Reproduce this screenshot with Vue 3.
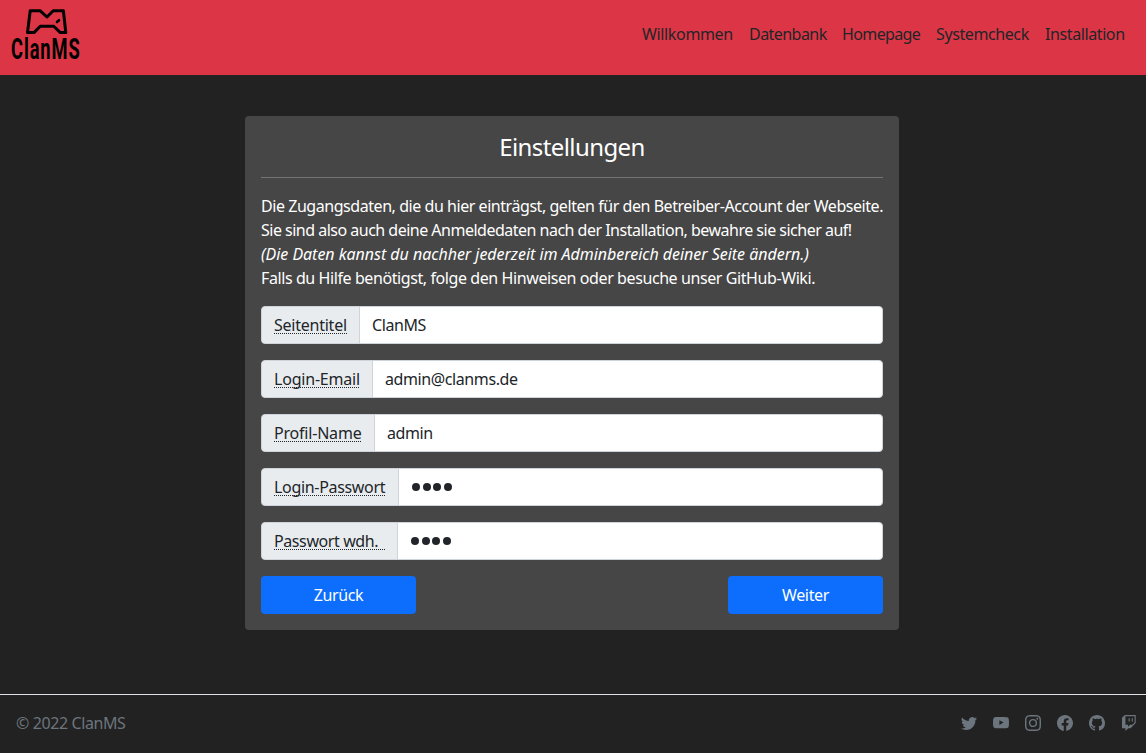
<script setup>
const nav = [
  { text: 'Willkommen', w: 91, ls: -0.35 },
  { text: 'Datenbank', w: 77, ls: -0.55 },
  { text: 'Homepage', w: 78, ls: -0.62 },
  { text: 'Systemcheck', w: 93, ls: -0.4 },
  { text: 'Installation', w: 80, ls: -0.4 },
]

const fields = [
  { label: 'Seitentitel', value: 'ClanMS', width: 99, line: 73, ls: -0.24 },
  { label: 'Login-Email', value: 'admin@clanms.de', width: 112, line: 86, ls: -0.2 },
  { label: 'Profil-Name', value: 'admin', width: 114, line: 88, ls: -0.2 },
  { label: 'Login-Passwort', secret: 4, width: 138, line: 111, ls: -0.32 },
  { label: 'Passwort wdh.', secret: 4, width: 137, line: 111, ls: -0.4 },
]

const icons = [
  { name: 'Twitter', d: 'M5.026 15c6.038 0 9.341-5.003 9.341-9.334 0-.14 0-.282-.006-.422A6.685 6.685 0 0 0 16 3.542a6.658 6.658 0 0 1-1.889.518 3.301 3.301 0 0 0 1.447-1.817 6.533 6.533 0 0 1-2.087.793A3.286 3.286 0 0 0 7.875 6.03a9.325 9.325 0 0 1-6.767-3.429 3.289 3.289 0 0 0 1.018 4.382A3.323 3.323 0 0 1 .64 6.575v.045a3.288 3.288 0 0 0 2.632 3.218 3.203 3.203 0 0 1-.865.115 3.23 3.23 0 0 1-.614-.057 3.283 3.283 0 0 0 3.067 2.277A6.588 6.588 0 0 1 .78 13.58a6.32 6.32 0 0 1-.78-.045A9.344 9.344 0 0 0 5.026 15z' },
  { name: 'YouTube', d: 'M8.051 1.999h.089c.822.003 4.987.033 6.11.335a2.01 2.01 0 0 1 1.415 1.42c.101.38.172.883.22 1.402l.01.104.022.26.008.104c.065.914.073 1.77.074 1.957v.075c-.001.194-.01 1.108-.082 2.06l-.008.105-.009.104c-.05.572-.124 1.14-.235 1.558a2.007 2.007 0 0 1-1.415 1.42c-1.16.312-5.569.334-6.18.335h-.142c-.309 0-1.587-.006-2.927-.052l-.17-.006-.087-.004-.171-.007-.171-.007c-1.11-.049-2.167-.128-2.654-.26a2.007 2.007 0 0 1-1.415-1.419c-.111-.417-.185-.986-.235-1.558L.09 9.82l-.008-.104A31.4 31.4 0 0 1 0 7.68v-.123c.002-.215.01-.958.064-1.778l.007-.103.003-.052.008-.104.022-.26.01-.104c.048-.519.119-1.023.22-1.402a2.007 2.007 0 0 1 1.415-1.42c.487-.13 1.544-.21 2.654-.26l.17-.007.172-.006.086-.003.171-.007A99.788 99.788 0 0 1 7.858 2h.193zM6.4 5.209v4.818l4.157-2.408L6.4 5.209z' },
  { name: 'Instagram', d: 'M8 0C5.829 0 5.556.01 4.703.048 3.85.088 3.269.222 2.76.42a3.917 3.917 0 0 0-1.417.923A3.927 3.927 0 0 0 .42 2.76C.222 3.268.087 3.85.048 4.7.01 5.555 0 5.827 0 8.001c0 2.172.01 2.444.048 3.297.04.852.174 1.433.372 1.942.205.526.478.972.923 1.417.444.445.89.719 1.416.923.51.198 1.09.333 1.942.372C5.555 15.99 5.827 16 8 16s2.444-.01 3.298-.048c.851-.04 1.434-.174 1.943-.372a3.916 3.916 0 0 0 1.416-.923c.445-.445.718-.891.923-1.417.197-.509.332-1.09.372-1.942C15.99 10.445 16 10.173 16 8s-.01-2.445-.048-3.299c-.04-.851-.175-1.433-.372-1.941a3.926 3.926 0 0 0-.923-1.417A3.911 3.911 0 0 0 13.24.42c-.51-.198-1.092-.333-1.943-.372C10.443.01 10.172 0 7.998 0h.003zm-.717 1.442h.718c2.136 0 2.389.007 3.232.046.78.035 1.204.166 1.486.275.373.145.64.319.92.599.28.28.453.546.598.92.11.281.24.705.275 1.485.039.843.047 1.096.047 3.231s-.008 2.389-.047 3.232c-.035.78-.166 1.203-.275 1.485a2.47 2.47 0 0 1-.599.919c-.28.28-.546.453-.92.598-.28.11-.704.24-1.485.276-.843.038-1.096.047-3.232.047s-2.39-.009-3.233-.047c-.78-.036-1.203-.166-1.485-.276a2.478 2.478 0 0 1-.92-.598 2.48 2.48 0 0 1-.6-.92c-.109-.281-.24-.705-.275-1.485-.038-.843-.046-1.096-.046-3.233 0-2.136.008-2.388.046-3.231.036-.78.166-1.204.276-1.486.145-.373.319-.64.599-.92.28-.28.546-.453.92-.598.282-.11.705-.24 1.485-.276.738-.034 1.024-.044 2.515-.045v.002zm4.988 1.328a.96.96 0 1 0 0 1.92.96.96 0 0 0 0-1.92zm-4.27 1.122a4.109 4.109 0 1 0 0 8.217 4.109 4.109 0 0 0 0-8.217zm0 1.441a2.667 2.667 0 1 1 0 5.334 2.667 2.667 0 0 1 0-5.334z' },
  { name: 'Facebook', d: 'M16 8.049c0-4.446-3.582-8.05-8-8.05C3.58 0-.002 3.603-.002 8.05c0 4.017 2.926 7.347 6.75 7.951v-5.625h-2.03V8.05H6.75V6.275c0-2.017 1.195-3.131 3.022-3.131.876 0 1.791.157 1.791.157v1.98h-1.009c-.993 0-1.303.621-1.303 1.258v1.51h2.218l-.354 2.326H9.25V16c3.824-.604 6.75-3.934 6.75-7.951z' },
  { name: 'GitHub', d: 'M8 0C3.58 0 0 3.58 0 8c0 3.54 2.29 6.53 5.47 7.59.4.07.55-.17.55-.38 0-.19-.01-.82-.01-1.49-2.01.37-2.53-.49-2.69-.94-.09-.23-.48-.94-.82-1.13-.28-.15-.68-.52-.01-.53.63-.01 1.08.58 1.23.82.72 1.21 1.87.87 2.33.66.07-.52.28-.87.51-1.07-1.78-.2-3.64-.89-3.64-3.95 0-.87.31-1.59.82-2.15-.08-.2-.36-1.02.08-2.12 0 0 .67-.21 2.2.82.64-.18 1.32-.27 2-.27.68 0 1.36.09 2 .27 1.53-1.04 2.2-.82 2.2-.82.44 1.1.16 1.92.08 2.12.51.56.82 1.27.82 2.15 0 3.07-1.87 3.75-3.65 3.95.29.25.54.73.54 1.48 0 1.07-.01 1.93-.01 2.2 0 .21.15.46.55.38A8.012 8.012 0 0 0 16 8c0-4.42-3.58-8-8-8z' },
  { name: 'Twitch', d: 'M3.857 0 1 2.857v10.286h3.429V16l2.857-2.857H9.57L14.714 8V0H3.857zm9.714 7.429-2.285 2.285H9l-2 2v-2H4.429V1.143h9.142v6.286z M11.857 3.143h-1.143V6.57h1.143V3.143zm-3.143 0H7.571V6.57h1.143V3.143z' },
]
</script>

<template>
  <div class="page">
    <header class="top">
      <svg class="logo" width="100" height="75" viewBox="0 0 100 75" role="img">
        <path d="M30.2 10.8H40.3L47 17L53.2 10.8H63.4L65.8 32.6H60.3L53.8 26.2H40.2L34 32.6H27.5Z" fill="none" stroke="#000" stroke-width="3" stroke-linejoin="round" />
        <path d="M57 22L59 20.2" stroke="#000" stroke-width="2.6" stroke-linecap="round" />
        <text x="0" y="0" transform="translate(11 58.5) scale(0.62 1)">ClanMS</text>
      </svg>
      <nav class="nav">
        <a v-for="n in nav" :key="n.text" :style="{ width: n.w + 'px', letterSpacing: n.ls + 'px' }">{{ n.text }}</a>
      </nav>
    </header>

    <main class="main">
      <section class="card">
        <h1 class="title">Einstellungen</h1>
        <hr class="rule" />
        <div class="intro">
          <div class="l1">Die Zugangsdaten, die du hier einträgst, gelten für den Betreiber-Account der Webseite.</div>
          <div class="l2">Sie sind also auch deine Anmeldedaten nach der Installation, bewahre sie sicher auf!</div>
          <div class="l3"><i>(Die Daten kannst du nachher jederzeit im Adminbereich deiner Seite ändern.)</i></div>
          <div class="l4">Falls du Hilfe benötigst, folge den Hinweisen oder besuche unser GitHub-Wiki.</div>
        </div>
        <div v-for="f in fields" :key="f.label" class="group">
          <div class="label" :style="{ width: f.width + 'px' }">
            <span class="abbr" :style="{ width: f.line + 'px', letterSpacing: f.ls + 'px' }">{{ f.label }}</span>
          </div>
          <div class="value">
            <span v-if="f.value">{{ f.value }}</span>
            <span v-else class="dots"><b v-for="i in f.secret" :key="i"></b></span>
          </div>
        </div>
        <div class="actions">
          <button class="btn">Zurück</button>
          <button class="btn">Weiter</button>
        </div>
      </section>
    </main>

    <footer class="foot">
      <span class="copy">© 2022 ClanMS</span>
      <div class="social">
        <svg v-for="i in icons" :key="i.name" width="16" height="16" viewBox="0 0 16 16" fill="currentColor" :aria-label="i.name"><path :d="i.d" /></svg>
      </div>
    </footer>
  </div>
</template>

<style>
body { margin: 0; background: #222; }
</style>

<style scoped>
* { box-sizing: border-box; }
.page {
  height: 753px;
  display: flex;
  flex-direction: column;
  overflow: hidden;
  background: #222;
  font: 16px/24px "Noto Sans", sans-serif;
  letter-spacing: -0.4px;
  white-space: nowrap;
}
.top {
  height: 75px;
  flex: none;
  display: flex;
  justify-content: space-between;
  background: #dc3545;
}
.logo { overflow: visible; }
.logo text { font: 700 29.5px Roboto, sans-serif; letter-spacing: 1.5px; fill: #000; }
.nav {
  display: flex;
  gap: 16px;
  padding: 22px 21px 0 0;
  color: #212529;
}
.main {
  flex: 1;
  padding: 41px 0 0 245px;
}
.card {
  width: 654px;
  height: 514px;
  padding: 16px;
  border-radius: 4px;
  background: #464646;
  color: #fff;
}
.title {
  margin: 0;
  font-size: 24px;
  font-weight: 400;
  line-height: 29px;
  letter-spacing: -0.6px;
  text-align: center;
}
.rule {
  height: 1px;
  margin: 16px 0;
  border: 0;
  background: #747474;
}
.intro { margin-bottom: 16px; }
.l1 { letter-spacing: -0.448px; }
.l2 { letter-spacing: -0.507px; }
.l3 { letter-spacing: -0.035px; }
.l4 { letter-spacing: -0.41px; }
.group {
  display: flex;
  height: 38px;
  margin-bottom: 16px;
  color: #212529;
}
.label {
  flex: none;
  padding: 6px 12px;
  border: 1px solid #ced4da;
  border-radius: 4px 0 0 4px;
  background: #e9ecef;
}
.abbr {
  display: block;
  height: 21px;
  background: repeating-linear-gradient(90deg, #212529 0 1px, transparent 1px 2px) 0 100% / 100% 1px no-repeat;
}
.value {
  flex: 1;
  margin-left: -1px;
  padding: 6px 12px;
  border: 1px solid #ced4da;
  border-radius: 0 4px 4px 0;
  background: #fff;
}
.dots {
  display: flex;
  gap: 2.5px;
  padding: 8px 0 0 1px;
}
.dots b {
  width: 8px;
  height: 8px;
  border-radius: 50%;
  background: #212529;
}
.actions {
  display: flex;
  justify-content: space-between;
}
.btn {
  width: 155px;
  height: 38px;
  padding: 0;
  border: 0;
  border-radius: 4px;
  background: #0d6efd;
  color: #fff;
  font: inherit;
  letter-spacing: -0.35px;
}
.foot {
  height: 59px;
  flex: none;
  display: flex;
  align-items: center;
  justify-content: space-between;
  padding: 0 9px 2px 16px;
  border-top: 1px solid #dee2e6;
  color: #6c757d;
}
.social { display: flex; gap: 16px; }
</style>
